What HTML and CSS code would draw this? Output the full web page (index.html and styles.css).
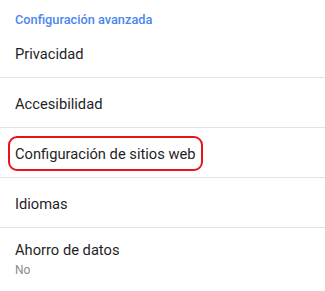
FILE: index.html
```html
<!DOCTYPE html>
<html lang="es">
<head>
<meta charset="utf-8">
<link rel="stylesheet" href="styles.css">
</head>
<body>
<div class="settings">
  <div class="section-title">Configuración avanzada</div>
  <div class="row row-first"><span class="label">Privacidad</span></div>
  <div class="row"><span class="label">Accesibilidad</span></div>
  <div class="row"><span class="label highlighted">Configuración de sitios web</span></div>
  <div class="row"><span class="label">Idiomas</span></div>
  <div class="row row-last">
    <div class="stack">
      <span class="label">Ahorro de datos</span>
      <span class="summary">No</span>
    </div>
  </div>
</div>
</body>
</html>
```
FILE: styles.css
```css
html, body {
  margin: 0;
  padding: 0;
  background: #ffffff;
}
body {
  font-family: Roboto, "Noto Sans", sans-serif;
  width: 325px;
  height: 291px;
  overflow: hidden;
}
.settings {
  display: flex;
  flex-direction: column;
}
.section-title {
  height: 28px;
  box-sizing: border-box;
  padding: 12px 0 0 15px;
  font-size: 12.75px;
  font-weight: 500;
  color: #4a86f0;
  line-height: 15px;
}
.row {
  height: 50px;
  box-sizing: border-box;
  border-bottom: 1px solid #e2e2e2;
  display: flex;
  align-items: center;
  padding-left: 15px;
  padding-top: 2px;
}
.row-first {
  padding-top: 3px;
}
.row-last {
  border-bottom: none;
  align-items: flex-start;
  padding-top: 13px;
}
.label {
  font-size: 14.7px;
  color: #1f1f1f;
  line-height: 18px;
}
.stack {
  display: flex;
  flex-direction: column;
}
.summary {
  font-size: 12px;
  color: #8a8a8a;
  line-height: 16px;
  margin-top: 3px;
}
.highlighted {
  position: relative;
}
.highlighted::after {
  content: "";
  position: absolute;
  left: -7.5px;
  right: -7.5px;
  top: -9px;
  bottom: -8px;
  border: 2px solid #e8141c;
  border-radius: 9px;
}
```
